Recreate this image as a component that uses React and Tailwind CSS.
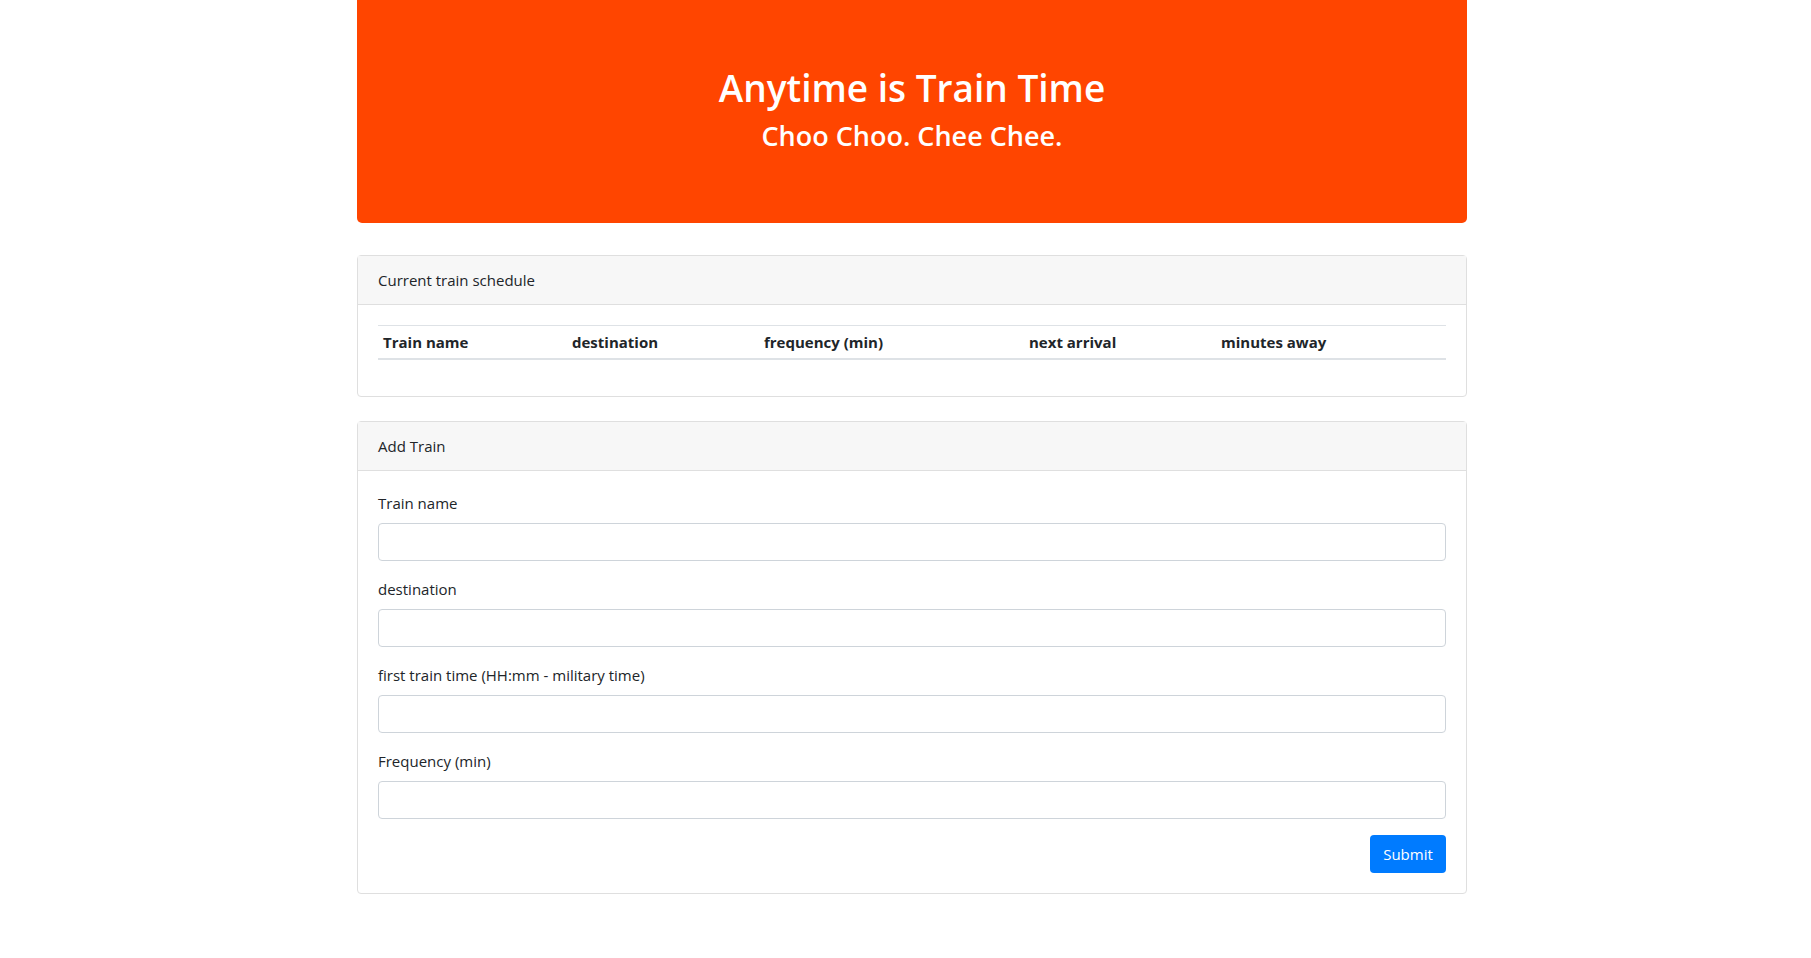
export default function App() {
  const cols = [
    { label: "Train name", w: "w-[189px]" },
    { label: "destination", w: "w-[192px]" },
    { label: "frequency (min)", w: "w-[265px]" },
    { label: "next arrival", w: "w-[192px]" },
    { label: "minutes away", w: "" },
  ];
  const fields = [
    "Train name",
    "destination",
    "first train time (HH:mm - military time)",
    "Frequency (min)",
  ];

  return (
    <div className="min-h-[958px] bg-white text-[16px] leading-6 text-[#212529] font-['Open_Sans',sans-serif]">
      <div className="ml-[357px] w-[1110px] pb-10">
        <div className="rounded-b-[5px] bg-[#ff4500] pt-16 pb-[70px] text-center text-white">
          <h1 className="text-[37px] font-semibold leading-[48px]">Anytime is Train Time</h1>
          <h3 className="mt-[7px] text-[27px] font-semibold leading-[34px]">Choo Choo. Chee Chee.</h3>
        </div>

        <div className="mt-8 rounded-[4px] border border-[#dfdfdf]">
          <div className="border-b border-[#dfdfdf] bg-[#f7f7f7] px-5 py-3 text-[15px]">
            Current train schedule
          </div>
          <div className="p-5">
            <table className="mb-4 w-full border-collapse text-left">
              <thead>
                <tr className="border-t border-[#dee2e6] border-b-2">
                  {cols.map((c) => (
                    <th key={c.label} className={`${c.w} px-[5px] py-[4px] text-[15px] font-bold`}>
                      {c.label}
                    </th>
                  ))}
                </tr>
              </thead>
            </table>
          </div>
        </div>

        <div className="mt-6 rounded-[4px] border border-[#dfdfdf]">
          <div className="border-b border-[#dfdfdf] bg-[#f7f7f7] px-5 py-3 text-[15px]">Add Train</div>
          <form className="p-5" onSubmit={(e) => e.preventDefault()}>
            {fields.map((f) => (
              <div key={f} className="mb-4">
                <label className="mb-2 block text-[15px]">{f}</label>
                <input
                  type="text"
                  className="block h-[38px] w-full rounded-[4px] border border-[#ced4da] px-3 text-[16px] outline-none"
                />
              </div>
            ))}
            <div className="flex justify-end">
              <button
                type="submit"
                className="h-[38px] w-[76px] rounded-[4px] bg-[#007bff] text-[15px] text-white"
              >
                Submit
              </button>
            </div>
          </form>
        </div>
      </div>
    </div>
  );
}
